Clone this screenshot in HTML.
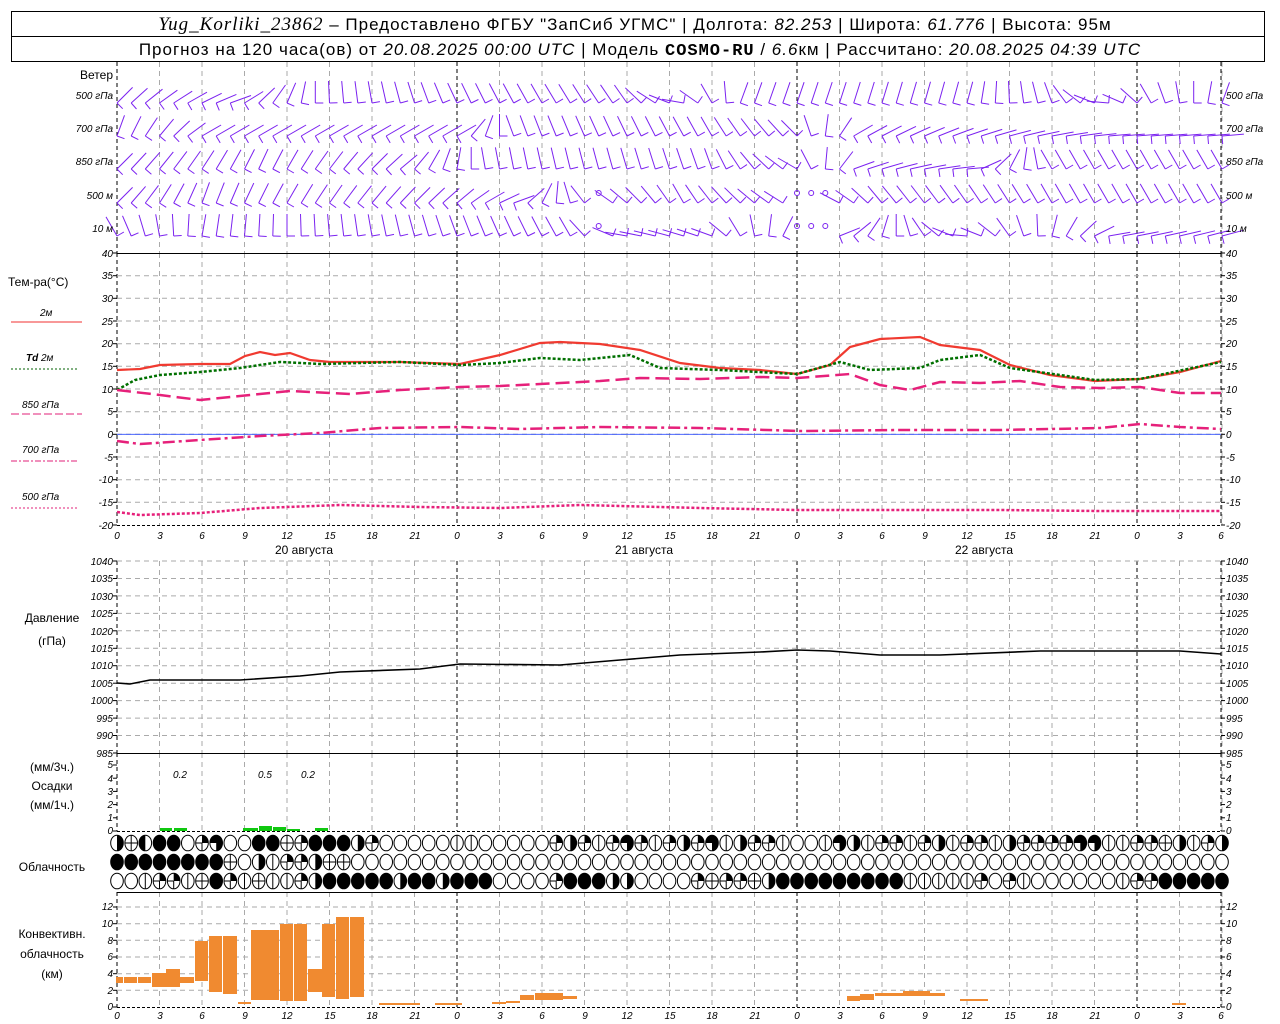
<!DOCTYPE html>
<html><head><meta charset="utf-8"><style>
html,body{margin:0;padding:0;background:#fff;}
svg{display:block;}
text{font-family:"Liberation Sans",sans-serif;fill:#000;}
.t{font-size:10px;font-style:italic;}
.l{font-size:12px;}
.h{font-size:17px;letter-spacing:1px;}
</style></head><body>
<svg id="s" width="1280" height="1024" viewBox="0 0 1280 1024" xmlns="http://www.w3.org/2000/svg">
<rect x="11.5" y="11.5" width="1253" height="50" fill="none" stroke="#000"/>
<line x1="11" y1="36.5" x2="1265" y2="36.5" stroke="#000"/>
<text x="635" y="30" class="h" text-anchor="middle"><tspan font-family="Liberation Serif" font-style="italic" font-size="19">Yug_Korliki_23862</tspan> – Предоставлено ФГБУ "ЗапСиб УГМС" | Долгота: <tspan font-style="italic">82.253</tspan> | Широта: <tspan font-style="italic">61.776</tspan> | Высота: 95м</text>
<text x="640" y="55" class="h" text-anchor="middle" font-size="16">Прогноз на 120 часа(ов) от <tspan font-style="italic">20.08.2025 00:00 UTC</tspan>  | Модель <tspan font-weight="bold" font-family="Liberation Mono">COSMO-RU</tspan> / <tspan font-style="italic">6.6</tspan>км | Рассчитано: <tspan font-style="italic">20.08.2025 04:39 UTC</tspan></text>
<g id="g"></g>
<text x="113" y="79" class="l" text-anchor="end">Ветер</text>
<g class="t" text-anchor="end" font-size="11"><text x="113" y="99">500 гПа</text><text x="113" y="132">700 гПа</text><text x="113" y="165">850 гПа</text><text x="113" y="199">500 м</text><text x="113" y="232">10   м</text></g>
<g class="t" font-size="11"><text x="1226" y="99">500 гПа</text><text x="1226" y="132">700 гПа</text><text x="1226" y="165">850 гПа</text><text x="1226" y="199">500 м</text><text x="1226" y="232">10   м</text></g>
<text x="8" y="286" class="l">Тем-ра(°C)</text>
<text x="40" y="316" class="t" font-style="normal">2м</text>
<text x="26" y="361" class="t"><tspan font-weight="bold">Td</tspan>  2м</text>
<text x="22" y="408" class="t">850 гПа</text>
<text x="22" y="453" class="t">700 гПа</text>
<text x="22" y="500" class="t">500 гПа</text>
<line x1="11" y1="322" x2="82" y2="322" stroke="#f03030" stroke-width="1"/>
<line x1="11" y1="369" x2="78" y2="369" stroke="#006000" stroke-dasharray="2,2"/>
<line x1="11" y1="414" x2="82" y2="414" stroke="#e0207a" stroke-dasharray="8,3"/>
<line x1="11" y1="461" x2="78" y2="461" stroke="#e0207a" stroke-dasharray="6,2,2,2"/>
<line x1="11" y1="508" x2="78" y2="508" stroke="#e0207a" stroke-dasharray="2,2"/>
<g class="t" text-anchor="end">
<text x="113" y="257">40</text><text x="113" y="279">35</text><text x="113" y="302">30</text><text x="113" y="325">25</text><text x="113" y="347">20</text><text x="113" y="370">15</text><text x="113" y="393">10</text><text x="113" y="415">5</text><text x="113" y="438">0</text><text x="113" y="461">-5</text><text x="113" y="483">-10</text><text x="113" y="506">-15</text><text x="113" y="529">-20</text>
</g>
<g class="t">
<text x="1226" y="257">40</text><text x="1226" y="279">35</text><text x="1226" y="302">30</text><text x="1226" y="325">25</text><text x="1226" y="347">20</text><text x="1226" y="370">15</text><text x="1226" y="393">10</text><text x="1226" y="415">5</text><text x="1226" y="438">0</text><text x="1226" y="461">-5</text><text x="1226" y="483">-10</text><text x="1226" y="506">-15</text><text x="1226" y="529">-20</text>
</g>
<g class="t" font-size="13" text-anchor="middle">
<text x="117" y="539">0</text><text x="160" y="539">3</text><text x="202" y="539">6</text><text x="245" y="539">9</text><text x="287" y="539">12</text><text x="330" y="539">15</text><text x="372" y="539">18</text><text x="415" y="539">21</text><text x="457" y="539">0</text><text x="500" y="539">3</text><text x="542" y="539">6</text><text x="585" y="539">9</text><text x="627" y="539">12</text><text x="670" y="539">15</text><text x="712" y="539">18</text><text x="755" y="539">21</text><text x="797" y="539">0</text><text x="840" y="539">3</text><text x="882" y="539">6</text><text x="925" y="539">9</text><text x="967" y="539">12</text><text x="1010" y="539">15</text><text x="1052" y="539">18</text><text x="1095" y="539">21</text><text x="1137" y="539">0</text><text x="1180" y="539">3</text><text x="1221" y="539">6</text>
</g>
<g class="l" text-anchor="middle" font-size="13"><text x="304" y="554">20 августа</text><text x="644" y="554">21 августа</text><text x="984" y="554">22 августа</text></g>
<text x="52" y="622" class="l" text-anchor="middle">Давление</text>
<text x="52" y="645" class="l" text-anchor="middle">(гПа)</text>
<g class="t" text-anchor="end" font-size="9">
<text x="113" y="565">1040</text><text x="113" y="582">1035</text><text x="113" y="600">1030</text><text x="113" y="617">1025</text><text x="113" y="635">1020</text><text x="113" y="652">1015</text><text x="113" y="669">1010</text><text x="113" y="687">1005</text><text x="113" y="704">1000</text><text x="113" y="722">995</text><text x="113" y="739">990</text><text x="113" y="757">985</text>
</g>
<g class="t" font-size="9">
<text x="1226" y="565">1040</text><text x="1226" y="582">1035</text><text x="1226" y="600">1030</text><text x="1226" y="617">1025</text><text x="1226" y="635">1020</text><text x="1226" y="652">1015</text><text x="1226" y="669">1010</text><text x="1226" y="687">1005</text><text x="1226" y="704">1000</text><text x="1226" y="722">995</text><text x="1226" y="739">990</text><text x="1226" y="757">985</text>
</g>
<text x="52" y="771" class="l" text-anchor="middle">(мм/3ч.)</text>
<text x="52" y="790" class="l" text-anchor="middle">Осадки</text>
<text x="52" y="809" class="l" text-anchor="middle">(мм/1ч.)</text>
<g class="t" text-anchor="end" font-size="9"><text x="113" y="768">5</text><text x="113" y="782">4</text><text x="113" y="795">3</text><text x="113" y="808">2</text><text x="113" y="821">1</text><text x="113" y="834">0</text></g>
<g class="t" font-size="9"><text x="1226" y="768">5</text><text x="1226" y="782">4</text><text x="1226" y="795">3</text><text x="1226" y="808">2</text><text x="1226" y="821">1</text><text x="1226" y="834">0</text></g>
<g class="t" font-size="13" text-anchor="middle"><text x="180" y="778">0.2</text><text x="265" y="778">0.5</text><text x="308" y="778">0.2</text></g>
<text x="52" y="871" class="l" text-anchor="middle">Облачность</text>
<text x="52" y="938" class="l" text-anchor="middle">Конвективн.</text>
<text x="52" y="958" class="l" text-anchor="middle">облачность</text>
<text x="52" y="978" class="l" text-anchor="middle">(км)</text>
<g class="t" text-anchor="end" font-size="9"><text x="113" y="910">12</text><text x="113" y="927">10</text><text x="113" y="944">8</text><text x="113" y="960">6</text><text x="113" y="977">4</text><text x="113" y="994">2</text><text x="113" y="1010">0</text></g>
<g class="t" font-size="9"><text x="1226" y="910">12</text><text x="1226" y="927">10</text><text x="1226" y="944">8</text><text x="1226" y="960">6</text><text x="1226" y="977">4</text><text x="1226" y="994">2</text><text x="1226" y="1010">0</text></g>
<g class="t" font-size="13" text-anchor="middle">
<text x="117" y="1019">0</text><text x="160" y="1019">3</text><text x="202" y="1019">6</text><text x="245" y="1019">9</text><text x="287" y="1019">12</text><text x="330" y="1019">15</text><text x="372" y="1019">18</text><text x="415" y="1019">21</text><text x="457" y="1019">0</text><text x="500" y="1019">3</text><text x="542" y="1019">6</text><text x="585" y="1019">9</text><text x="627" y="1019">12</text><text x="670" y="1019">15</text><text x="712" y="1019">18</text><text x="755" y="1019">21</text><text x="797" y="1019">0</text><text x="840" y="1019">3</text><text x="882" y="1019">6</text><text x="925" y="1019">9</text><text x="967" y="1019">12</text><text x="1010" y="1019">15</text><text x="1052" y="1019">18</text><text x="1095" y="1019">21</text><text x="1137" y="1019">0</text><text x="1180" y="1019">3</text><text x="1221" y="1019">6</text>
</g>
</svg>
<script>
(function(){
var g=document.getElementById('g'),h='';
function L(x1,y1,x2,y2,st){h+='<line x1="'+x1+'" y1="'+y1+'" x2="'+x2+'" y2="'+y2+'" '+st+'/>';}
function X(i){return 117+i*14.1667;}
var panels=[[62,253],[253,525],[561,753],[753,831],[892,1007]];
for(var k=0;k<=26;k++){var x=(117+k*42.5).toFixed(1);var day=(k%8==0);
panels.forEach(function(p){L(x,p[0],x,p[1],day?'stroke="#000" stroke-dasharray="4,3"':'stroke="#aaa" stroke-dasharray="5,4"');});}
[[62,253],[253,525],[561,753],[753,831],[892,1007]].forEach(function(p){L(1221,p[0],1221,p[1],'stroke="#000" stroke-dasharray="4,3"');});
function hg(y){L(117,y,1221,y,'stroke="#aaa" stroke-dasharray="5,4"');}
for(var v=35;v>=-15;v-=5)hg((253+(40-v)*4.5333).toFixed(1));
for(var p=1035;p>985;p-=5)hg((561+(1040-p)*3.4909).toFixed(1));
for(var c=2;c<=12;c+=2)hg((1007-c*8.333).toFixed(1));
hg(561);
function ticks(arr){arr.forEach(function(y){L(113,y,117,y,'stroke="#000"');L(1221,y,1225,y,'stroke="#000"');});}
var a=[];for(v=40;v>=-20;v-=5)a.push((253+(40-v)*4.5333).toFixed(1));ticks(a);
a=[];for(p=1040;p>=985;p-=5)a.push((561+(1040-p)*3.4909).toFixed(1));ticks(a);
a=[];for(v=0;v<=5;v++)a.push((831-v*13.2).toFixed(1));ticks(a);
a=[];for(v=0;v<=12;v+=2)a.push((1007-v*8.333).toFixed(1));ticks(a);
L(117,253.5,1221,253.5,'stroke="#000"');L(117,753.5,1221,753.5,'stroke="#000"');L(117,892.5,1221,892.5,'stroke="#000"');
L(117,1007.5,1221,1007.5,'stroke="#000" stroke-dasharray="3,2"');L(117,831.5,1221,831.5,'stroke="#000" stroke-dasharray="3,2"');
L(117,525.5,1221,525.5,'stroke="#000" stroke-dasharray="3,2"');
L(117,434.3,1221,434.3,'stroke="#3050ff" stroke-width="0.8"');
function pl(pts,st){h+='<polyline fill="none" points="'+pts+'" '+st+'/>';}
pl("117,370 140,369 160,365 200,364 230,364 245,356 260,352 275,355 290,353 310,360 330,362 400,362 460,364 500,355 540,343 560,342 600,344 640,350 680,363 720,368 760,370 797,374 830,365 850,347 880,339 920,337 940,345 980,350 1010,365 1050,375 1095,381 1140,379 1180,372 1221,361",'stroke="#f03a30" stroke-width="2.2"');
pl("117,390 135,380 160,375 200,372 240,368 280,362 320,364 400,362 460,365 500,363 540,358 580,360 630,355 660,368 720,370 797,374 840,362 870,370 920,368 940,360 980,355 1010,368 1060,375 1095,380 1140,379 1221,362",'stroke="#007000" stroke-width="2.5" stroke-dasharray="3,2"');
pl("117,390 160,395 200,400 250,395 290,391 350,394 400,390 460,387 500,386 560,383 600,381 640,378 700,379 760,377 797,378 850,374 880,385 910,390 940,382 980,383 1020,381 1060,387 1100,388 1140,387 1180,393 1221,393",'stroke="#e6207a" stroke-width="2.5" stroke-dasharray="14,6"');
pl("117,441 140,444 200,440 260,436 320,433 380,428 460,427 520,429 600,427 700,428 800,431 900,430 1000,430 1100,428 1140,424 1180,427 1221,429",'stroke="#e6207a" stroke-width="2.5" stroke-dasharray="12,4,3,4"');
pl("117,512 140,515 200,513 260,508 340,505 420,507 500,508 580,505 700,508 797,510 900,510 1000,510 1100,511 1221,511",'stroke="#e6207a" stroke-width="2.5" stroke-dasharray="3,2"');
pl("117,683 130,684 150,680 240,680 300,676 340,672 420,669 460,664 560,665 620,660 680,655 760,652 797,650 830,651 880,655 940,655 1040,651 1180,651 1221,654",'stroke="#000" stroke-width="1.6"');
[[160,172,828],[174,187,828],[243,258,828],[259,272,826],[273,286,827],[287,300,829],[315,328,828]].forEach(function(b){h+='<rect x="'+b[0]+'" y="'+b[2]+'" width="'+(b[1]-b[0])+'" height="'+(831-b[2])+'" fill="#10c810"/>';});
[[116,123,977,983],[124,137,977,983],[138,151,977,983],[152,166,973,987],[166,180,969,987],[180,194,977,983],[195,208,941,981],[209,222,936,992],[223,237,936,994],[238,251,1002,1004],[251,279,930,1000],[280,293,924,1001],[294,307,924,1001],[308,322,969,992],[322,335,924,997],[336,349,917,999],[350,364,917,997],[379,420,1003,1005],[435,462,1003,1005],[492,506,1002,1004],[506,520,1001,1003],[520,534,995,1000],[535,549,993,1000],[549,563,993,1000],[563,577,996,999],[847,860,996,1001],[860,874,994,1000],[875,903,993,996],[903,930,991,996],[930,945,993,996],[960,988,999,1001],[1172,1186,1003,1005]].forEach(function(b){h+='<rect x="'+b[0]+'" y="'+b[2]+'" width="'+(b[1]-b[0])+'" height="'+(b[3]-b[2])+'" fill="#f08a30"/>';});
function pad(s,ch){while(s.length<79)s+=ch;return s.slice(0,79);}
var rows=[pad("RhLffoqtooffhqfffRqooooovvoooooqRqvqtqvqRqtvRqqvoovtRvqqvqRvqqvRqqqqttvvqqhRvqR",'q'),
pad("ffffffffhoRvqqRhh",'o'),
pad("oovqqvhfqvhvvqRfffffRffRfffooooqfffRRooooqhqqhRfffffffffvvvvvqoqvoooooovqqfffffffff",'f')];
var ry=[843,862,881];
rows.forEach(function(r,ri){for(var i=0;i<79;i++){var cx=X(i),cy=ry[ri],rx=6.3,ryy=7.8,t=r[i];
var el='<ellipse cx="'+cx.toFixed(1)+'" cy="'+cy+'" rx="'+rx+'" ry="'+ryy+'" fill="'+(t=='f'?'#000':'#fff')+'" stroke="#000" stroke-width="1"/>';
var A=cx.toFixed(1),T=cy-ryy,B=cy+ryy;
if(t=='L')el+='<path d="M'+A+' '+T+' A'+rx+' '+ryy+' 0 0 0 '+A+' '+B+'Z" fill="#000"/>';
if(t=='R')el+='<path d="M'+A+' '+T+' A'+rx+' '+ryy+' 0 0 1 '+A+' '+B+'Z" fill="#000"/>';
if(t=='q')el+='<path d="M'+A+' '+cy+' L'+A+' '+T+' A'+rx+' '+ryy+' 0 0 1 '+(cx+rx).toFixed(1)+' '+cy+'Z" fill="#000"/><line x1="'+A+'" y1="'+cy+'" x2="'+A+'" y2="'+B+'" stroke="#000"/><line x1="'+(cx-rx)+'" y1="'+cy+'" x2="'+A+'" y2="'+cy+'" stroke="#000"/>';
if(t=='t')el+='<path d="M'+A+' '+cy+' L'+(cx-rx).toFixed(1)+' '+cy+' A'+rx+' '+ryy+' 0 1 1 '+A+' '+B+'Z" fill="#000"/>';
if(t=='v'||t=='h')el+='<line x1="'+A+'" y1="'+T+'" x2="'+A+'" y2="'+B+'" stroke="#000"/>';
if(t=='h')el+='<line x1="'+(cx-rx)+'" y1="'+cy+'" x2="'+(cx+rx)+'" y2="'+cy+'" stroke="#000"/>';
h+=el;}});
function interp(k,i){for(var j=0;j<k.length-1;j++){if(i>=k[j][0]&&i<=k[j+1][0]){var f=(i-k[j][0])/(k[j+1][0]-k[j][0]);return k[j][1]+(k[j+1][1]-k[j][1])*f;}}return k[k.length-1][1];}
var lv=[[95,[[0,45],[8,70],[14,0],[24,-25],[36,-35],[40,-80],[44,20],[60,15],[66,-20],[70,-85],[73,-30],[78,20]]],
[128,[[0,20],[6,60],[24,60],[28,-20],[42,-30],[48,-45],[52,60],[70,85],[78,85]]],
[161,[[0,45],[10,25],[20,50],[26,-10],[42,-20],[48,-60],[52,70],[60,85],[66,-30],[78,-30]]],
[195,[[0,45],[6,20],[24,50],[28,70],[34,-60],[40,-30],[50,-70],[54,-40],[66,-30],[78,-30]]],
[228,[[0,-30],[6,10],[24,-20],[32,-30],[36,-80],[42,-70],[50,85],[60,-85],[70,80],[78,75]]]];
lv.forEach(function(l){for(var i=0;i<79;i++){var x=X(i),y=l[0];
if((l[0]==195||l[0]==228)&&(i==34||i==48||i==49||i==50)){h+='<circle cx="'+x.toFixed(1)+'" cy="'+(y-2)+'" r="2.5" fill="none" stroke="#7b22f0"/>';continue;}
var an=interp(l[1],i)*Math.PI/180,len=22;
var bx=x,by=y+8;
var x2=bx+len*Math.sin(an),y2=by-len*Math.cos(an);
var px=Math.cos(an)*8,py=Math.sin(an)*8;
var s='stroke="#7b22f0" stroke-width="1"';
L(bx.toFixed(1),by,x2.toFixed(1),y2.toFixed(1),s);
L(bx.toFixed(1),by,(bx+px).toFixed(1),(by+py).toFixed(1),s);
}});
g.innerHTML=h;
})();
</script>
</body></html>
